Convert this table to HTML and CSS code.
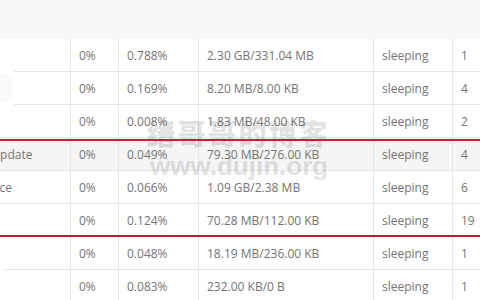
FILE: index.html
```html
<!DOCTYPE html>
<html lang="zh">
<head>
<meta charset="utf-8">
<title>Processes</title>
<link rel="stylesheet" href="styles.css">
</head>
<body>
<div class="screen">
  <div class="toolbar"></div>
  <div class="table">
    <div class="row">
      <div class="cell name in14">init</div>
      <div class="cell">0%</div>
      <div class="cell">0.788%</div>
      <div class="cell">2.30 GB/331.04 MB</div>
      <div class="cell">sleeping</div>
      <div class="cell">1</div>
    </div>
    <div class="row">
      <div class="cell name in14">sshd</div>
      <div class="cell">0%</div>
      <div class="cell">0.169%</div>
      <div class="cell">8.20 MB/8.00 KB</div>
      <div class="cell">sleeping</div>
      <div class="cell">4</div>
    </div>
    <div class="row">
      <div class="cell name">cron</div>
      <div class="cell">0%</div>
      <div class="cell">0.008%</div>
      <div class="cell">1.83 MB/48.00 KB</div>
      <div class="cell">sleeping</div>
      <div class="cell">2</div>
    </div>
    <div class="row hover">
      <div class="cell name">SteamUpdate</div>
      <div class="cell">0%</div>
      <div class="cell">0.049%</div>
      <div class="cell">79.30 MB/276.00 KB</div>
      <div class="cell">sleeping</div>
      <div class="cell">4</div>
    </div>
    <div class="row">
      <div class="cell name">myservice</div>
      <div class="cell">0%</div>
      <div class="cell">0.066%</div>
      <div class="cell">1.09 GB/2.38 MB</div>
      <div class="cell">sleeping</div>
      <div class="cell">6</div>
    </div>
    <div class="row">
      <div class="cell name">php</div>
      <div class="cell">0%</div>
      <div class="cell">0.124%</div>
      <div class="cell">70.28 MB/112.00 KB</div>
      <div class="cell">sleeping</div>
      <div class="cell">19</div>
    </div>
    <div class="row">
      <div class="cell name in4">bash</div>
      <div class="cell">0%</div>
      <div class="cell">0.048%</div>
      <div class="cell">18.19 MB/236.00 KB</div>
      <div class="cell">sleeping</div>
      <div class="cell">1</div>
    </div>
    <div class="row">
      <div class="cell name">top</div>
      <div class="cell">0%</div>
      <div class="cell">0.083%</div>
      <div class="cell">232.00 KB/0 B</div>
      <div class="cell">sleeping</div>
      <div class="cell">1</div>
    </div>
  </div>
  <div class="blob"></div>
  <div class="mark">
    <div class="mark-cn">缙哥哥的博客</div>
    <div class="mark-en">www.dujin.org</div>
  </div>
  <div class="highlight"></div>
</div>
</body>
</html>
```
FILE: styles.css
```css
* { box-sizing: border-box; }
html, body { margin: 0; padding: 0; background: #fff; }
body {
  font-family: "Open Sans", "Noto Sans", "Noto Sans CJK SC", sans-serif;
  font-size: 12px;
  color: #747474;
  overflow: hidden;
}
.screen {
  position: relative;
  width: 480px;
  height: 300px;
  overflow: hidden;
}
.toolbar {
  height: 39px;
  background: #f7f7f7;
}
.table {
  margin-left: -52px;
}
.row {
  display: grid;
  grid-template-columns: 122px 48px 80px 175px 79px 60px;
  height: 33px;
}
.row.hover { background: #f5f5f5; }
.cell {
  display: flex;
  align-items: center;
  padding-left: 8px;
  white-space: nowrap;
  overflow: hidden;
  border-left: 1px solid #e6e6e6;
  border-bottom: 1px solid #e6e6e6;
}
.cell.name {
  position: relative;
  border-left: none;
  border-bottom: none;
}
.cell.name::after {
  content: "";
  position: absolute;
  left: 0;
  right: 0;
  bottom: 0;
  height: 1px;
  background: #e6e6e6;
}
.cell.name.in14::after { left: 66px; }
.cell.name.in4::after { left: 56px; }
.blob {
  position: absolute;
  left: 0;
  top: 74px;
  width: 12px;
  height: 28px;
  background: #f9f9f9;
  border-radius: 0 4px 4px 0;
}
.mark {
  position: absolute;
  left: 147px;
  top: 118px;
  font-family: "Liberation Sans", "Noto Sans CJK SC", sans-serif;
  font-weight: 700;
  color: rgba(70, 70, 70, 0.17);
  pointer-events: none;
}
.mark-cn {
  font-family: "Noto Sans CJK SC", sans-serif;
  font-weight: 900;
  font-size: 28px;
  line-height: 30px;
  letter-spacing: 2.5px;
}
.mark-en {
  margin-top: 4px;
  margin-left: 3px;
  font-size: 26px;
  line-height: 28px;
}
.highlight {
  position: absolute;
  left: -10px;
  right: -10px;
  top: 139px;
  height: 98px;
  border-top: 2px solid #c91f2c;
  border-bottom: 2px solid #b81a26;
}
```
